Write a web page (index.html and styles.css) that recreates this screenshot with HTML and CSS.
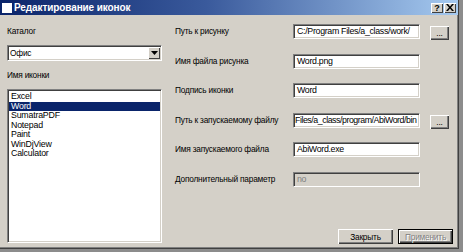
FILE: index.html
```html
<!DOCTYPE html>
<html lang="ru">
<head>
    <meta charset="UTF-8">
    <title>Редактирование иконок</title>
    <link rel="stylesheet" href="styles.css">
</head>
<body>

<div class="window">
    <div class="titlebar">
        <span class="app-icon"></span>
        <span class="title">Редактирование иконок</span>
        <span class="caption-btns">
            <span class="caption-btn">?</span>
            <span class="caption-btn close">
                <svg width="8" height="7" viewBox="0 0 8 7"><path d="M0 0h2l2 2.5L6 0h2L5 3.5 8 7H6L4 4.5 2 7H0l3-3.5z" fill="#000"/></svg>
            </span>
        </span>
    </div>

    <div class="content">
        <!-- левая колонка: каталог и список -->
        <div class="left">
            <div class="label">Каталог</div>
            <div class="select">
                <span class="select-value">Офис</span>
                <span class="select-arrow">
                    <svg width="7" height="4" viewBox="0 0 7 4"><path d="M0 0h7L3.5 4z" fill="#000"/></svg>
                </span>
            </div>
            <div class="label label-list">Имя иконки</div>
            <ul class="listbox">
                <li>Excel</li>
                <li class="selected">Word</li>
                <li>SumatraPDF</li>
                <li>Notepad</li>
                <li>Paint</li>
                <li>WinDjView</li>
                <li>Calculator</li>
            </ul>
        </div>

        <!-- правая колонка: поля -->
        <div class="right">
            <div class="form">
                <div class="label">Путь к рисунку</div>
                <div class="field">C:/Program Files/a_class/work/</div>
                <div class="btn small">...</div>

                <div class="label">Имя файла рисунка</div>
                <div class="field">Word.png</div>
                <div></div>

                <div class="label">Подпись иконки</div>
                <div class="field">Word</div>
                <div></div>

                <div class="label">Путь к запускаемому файлу</div>
                <div class="field field-end">Files/a_class/program/AbiWord/bin</div>
                <div class="btn small">...</div>

                <div class="label">Имя запускаемого файла</div>
                <div class="field">AbiWord.exe</div>
                <div></div>

                <div class="label">Дополнительный параметр</div>
                <div class="field disabled">no</div>
                <div></div>
            </div>

            <div class="footer">
                <div class="btn">Закрыть</div>
                <div class="btn default disabled-text">Применить</div>
            </div>
        </div>
    </div>
</div>

</body>
</html>
```

FILE: styles.css
```css
body {
    margin: 0;
    padding: 0;
    background-color: #8c8c8c;
    font-family: 'Liberation Sans', Arial, sans-serif;
    font-size: 8.3px;
    letter-spacing: -0.2px;
    color: #000;
}

.window {
    width: 458px;
    height: 248px;
    background-color: #d4d0c8;
    border-right: 1px solid #404040;
    border-bottom: 1px solid #404040;
    box-shadow: inset -1px -1px 0 #808080;
    overflow: hidden;
}

.titlebar {
    height: 15px;
    display: flex;
    align-items: center;
    background: linear-gradient(to right, #0a246a 0%, #3a5a9c 45%, #a6caf0 100%);
    color: white;
}

.app-icon {
    width: 10px;
    height: 10px;
    margin-left: 2px;
    background-color: #fff;
}

.title {
    margin-left: 2px;
    font-weight: bold;
    font-size: 10px;
    letter-spacing: -0.1px;
    flex: 1;
}

.caption-btns {
    display: flex;
    gap: 1px;
    margin-right: 2px;
}

.caption-btn {
    width: 12px;
    height: 10px;
    background-color: #d4d0c8;
    box-shadow: inset 1px 1px 0 #fff, inset -1px -1px 0 #404040;
    color: #000;
    font-weight: bold;
    font-size: 9px;
    line-height: 10px;
    text-align: center;
    display: flex;
    align-items: center;
    justify-content: center;
}

.content {
    display: flex;
    padding: 9px 0 0 7px;
    height: 220px;
}

.left {
    width: 155px;
    display: flex;
    flex-direction: column;
}

.label {
    height: 15px;
    line-height: 15px;
    white-space: nowrap;
}

.select {
    margin-top: 6px;
    height: 16px;
    box-sizing: border-box;
    background-color: #fff;
    border: 1px solid;
    border-color: #808080 #fff #fff #808080;
    box-shadow: inset 1px 1px 0 #404040, inset -1px -1px 0 #d4d0c8;
    display: flex;
    align-items: center;
    justify-content: space-between;
}

.select-value {
    padding-left: 2px;
}

.select-arrow {
    width: 12px;
    height: 12px;
    margin-right: 1px;
    background-color: #d4d0c8;
    box-shadow: inset 1px 1px 0 #fff, inset -1px -1px 0 #404040;
    display: flex;
    align-items: center;
    justify-content: center;
}

.label-list {
    margin-top: 7px;
}

.listbox {
    list-style: none;
    margin: 6px 0 0 0;
    padding: 2px 0 0 0;
    height: 154px;
    box-sizing: border-box;
    background-color: #fff;
    border: 1px solid;
    border-color: #808080 #fff #fff #808080;
    box-shadow: inset 1px 1px 0 #404040, inset -1px -1px 0 #d4d0c8;
}

.listbox li {
    height: 9.5px;
    line-height: 9.5px;
    padding-left: 2px;
    margin: 0 1px 0 1px;
    font-size: 8.8px;
}

.listbox .selected {
    background-color: #0a246a;
    color: white;
}

.right {
    margin-left: 13px;
    width: 278px;
    display: flex;
    flex-direction: column;
}

.form {
    display: grid;
    grid-template-columns: 118px 127px 29px;
    grid-auto-rows: 15px;
    row-gap: 14.5px;
}

.form .btn.small {
    margin-left: 10px;
    margin-top: 2px;
    height: 14px;
}

.field {
    box-sizing: border-box;
    height: 15px;
    line-height: 13px;
    padding-left: 3px;
    background-color: #fff;
    border: 1px solid;
    border-color: #808080 #fff #fff #808080;
    box-shadow: inset 1px 1px 0 #404040, inset -1px -1px 0 #d4d0c8;
    white-space: nowrap;
    overflow: hidden;
    font-size: 8.8px;
    letter-spacing: -0.3px;
}

.field-end {
    padding-left: 1px;
    letter-spacing: -0.45px;
}

.field.disabled {
    background-color: #d4d0c8;
    color: #808080;
}

.btn {
    box-sizing: border-box;
    background-color: #d4d0c8;
    box-shadow: inset 1px 1px 0 #fff, inset -1px -1px 0 #404040, inset -2px -2px 0 #808080;
    display: flex;
    align-items: center;
    justify-content: center;
    white-space: nowrap;
}

.footer {
    margin-top: auto;
    display: flex;
    justify-content: flex-end;
    gap: 5px;
}

.footer .btn {
    width: 55px;
    height: 15px;
}

.btn.default {
    border: 1px solid #000;
}

.disabled-text {
    color: #808080;
    text-shadow: 1px 1px 0 #fff;
}
```
